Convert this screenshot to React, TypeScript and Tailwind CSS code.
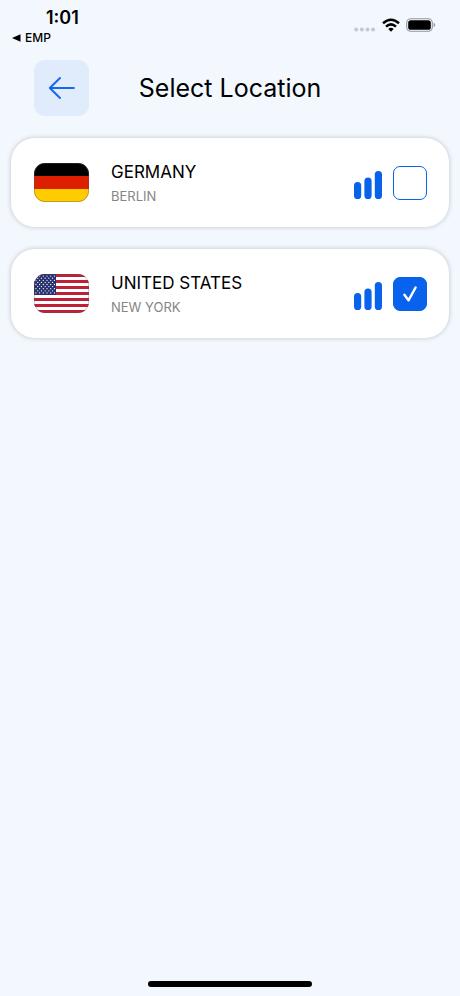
import { useState } from "react";

type Place = { id: string; country: string; city: string; Flag: () => React.JSX.Element };

function GermanyFlag() {
  return (
    <svg viewBox="0 0 55 39" className="h-[39px] w-[55px]" aria-hidden="true">
      <clipPath id="de-clip">
        <rect width="55" height="39" rx="11" />
      </clipPath>
      <g clipPath="url(#de-clip)">
        <rect width="55" height="13" fill="#000" />
        <rect y="13" width="55" height="13" fill="#dd1f00" />
        <rect y="26" width="55" height="13" fill="#ffcc00" />
      </g>
      <rect x=".4" y=".4" width="54.2" height="38.2" rx="10.6" fill="none" stroke="#555" strokeOpacity=".5" strokeWidth=".8" />
    </svg>
  );
}

function UnitedStatesFlag() {
  const stripes = [0, 2, 4, 6, 8, 10, 12];
  const stars = Array.from({ length: 9 }, (_, row) =>
    Array.from({ length: row % 2 ? 5 : 6 }, (_, col) => ({
      x: 1.9 + col * 3.7 + (row % 2 ? 1.85 : 0),
      y: 2.1 + row * 2.1,
    })),
  ).flat();
  return (
    <svg viewBox="0 0 55 39" className="h-[39px] w-[55px]" aria-hidden="true">
      <clipPath id="us-clip">
        <rect width="55" height="39" rx="11" />
      </clipPath>
      <g clipPath="url(#us-clip)">
        <rect width="55" height="39" fill="#fff" />
        {stripes.map((s) => (
          <rect key={s} y={s * 3} width="55" height="3" fill="#be2036" />
        ))}
        <rect width="22" height="21" fill="#26306f" />
        {stars.map((s) => (
          <circle key={`${s.x}-${s.y}`} cx={s.x} cy={s.y} r=".65" fill="#fff" />
        ))}
      </g>
      <rect x=".4" y=".4" width="54.2" height="38.2" rx="10.6" fill="none" stroke="#555" strokeOpacity=".4" strokeWidth=".8" />
    </svg>
  );
}

const places: Place[] = [
  { id: "de", country: "GERMANY", city: "BERLIN", Flag: GermanyFlag },
  { id: "us", country: "UNITED STATES", city: "NEW YORK", Flag: UnitedStatesFlag },
];

function StatusBar() {
  return (
    <div className="flex items-start justify-between pt-2 pr-6 pl-3">
      <div>
        <div className="pl-[34px] text-lg leading-5 font-semibold">1:01</div>
        <button type="button" className="flex items-center gap-1 pt-[2px] text-xs leading-4 font-medium">
          <svg viewBox="0 0 9 8" className="h-2 w-[9px]" aria-hidden="true">
            <path d="M0 4 8.5 .3v7.4z" />
          </svg>
          EMP
        </button>
      </div>
      <div className="flex items-center gap-[6px] pt-[10px]">
        <svg viewBox="0 0 22 5" className="mt-2 h-[5px] w-[22px]" fill="#c3c8d2" aria-hidden="true">
          <circle cx="2.2" cy="2.5" r="2" />
          <circle cx="7.9" cy="2.5" r="2" />
          <circle cx="13.5" cy="2.5" r="2" />
          <circle cx="19.1" cy="2.5" r="2" />
        </svg>
        <svg viewBox="0 0 18 14" className="h-[14px] w-[18px]" aria-hidden="true">
          <g fill="none" stroke="#000" strokeWidth="2.5">
            <path d="M1 5.3Q9-1.7 17 5.3" />
            <path d="M4 8.6Q9 4.2 14 8.6" />
          </g>
          <path d="M6.3 10.9Q9 8.6 11.7 10.9L9 13.7z" />
        </svg>
        <svg viewBox="0 0 30 14" className="h-[14px] w-[30px]" aria-hidden="true">
          <rect x=".7" y=".7" width="25.6" height="12.6" rx="4" fill="none" stroke="#000" strokeOpacity=".4" strokeWidth="1.1" />
          <rect x="2.2" y="2.2" width="22.6" height="9.6" rx="2.6" />
          <path d="M27.6 4.8q1.6.6 1.6 2.2t-1.6 2.2z" fillOpacity=".4" />
        </svg>
      </div>
    </div>
  );
}

function SignalBars() {
  return (
    <svg viewBox="0 0 28 28" className="h-7 w-7" fill="#0862ec" aria-hidden="true">
      <rect x="0" y="11" width="7.2" height="17" rx="3.6" />
      <rect x="10.4" y="6.5" width="7.2" height="21.5" rx="3.6" />
      <rect x="20.8" y="0" width="7.2" height="28" rx="3.6" />
    </svg>
  );
}

export default function App() {
  const [selected, setSelected] = useState("us");
  return (
    <div className="flex min-h-screen flex-col bg-[#f3f8ff] font-['Inter',sans-serif] text-black">
      <StatusBar />
      <header className="mt-[14px] grid grid-cols-[55px_1fr_55px] items-center px-[34px]">
        <button type="button" aria-label="Back" className="flex h-14 items-center justify-center rounded-[11px] bg-[#e0ebfc]">
          <svg viewBox="0 0 28 24" className="h-6 w-7" fill="none" stroke="#1668ea" strokeWidth="2" strokeLinecap="round" strokeLinejoin="round" aria-hidden="true">
            <path d="M25.8 12H1.8M12 2 1.8 12 12 22" />
          </svg>
        </button>
        <h1 className="text-center text-[25px] leading-8">Select Location</h1>
      </header>
      <main className="mt-[22px] flex flex-col gap-[22px] px-[11px]">
        {places.map(({ id, country, city, Flag }) => (
          <label key={id} className="flex h-[89px] items-center rounded-[24px] bg-white pr-[22px] pl-[23px] shadow-[0_0_5px_rgba(0,0,0,0.22)]">
            <Flag />
            <span className="ml-[22px] flex flex-1 flex-col gap-[2px]">
              <span className="text-[17px] leading-6">{country}</span>
              <span className="text-[13px] leading-5 text-[#858585]">{city}</span>
            </span>
            <span className="mt-1 mr-[11px]">
              <SignalBars />
            </span>
            <span className="grid place-items-center">
              <input
                type="checkbox"
                checked={selected === id}
                onChange={() => setSelected(id)}
                className="peer col-start-1 row-start-1 h-[34px] w-[34px] appearance-none rounded-[7px] border border-[#0862ec] bg-white checked:bg-[#0862ec]"
              />
              <svg viewBox="0 0 14 16" className="pointer-events-none invisible col-start-1 row-start-1 h-4 w-[14px] peer-checked:visible" fill="none" stroke="#fff" strokeWidth="2.4" strokeLinecap="round" strokeLinejoin="round" aria-hidden="true">
                <path d="M1.4 8.8 5.5 14.3 12.6 1.5" />
              </svg>
            </span>
          </label>
        ))}
      </main>
      <footer className="mt-auto flex justify-center pb-[9px]">
        <div className="h-[6px] w-[164px] rounded-full bg-black" />
      </footer>
    </div>
  );
}
